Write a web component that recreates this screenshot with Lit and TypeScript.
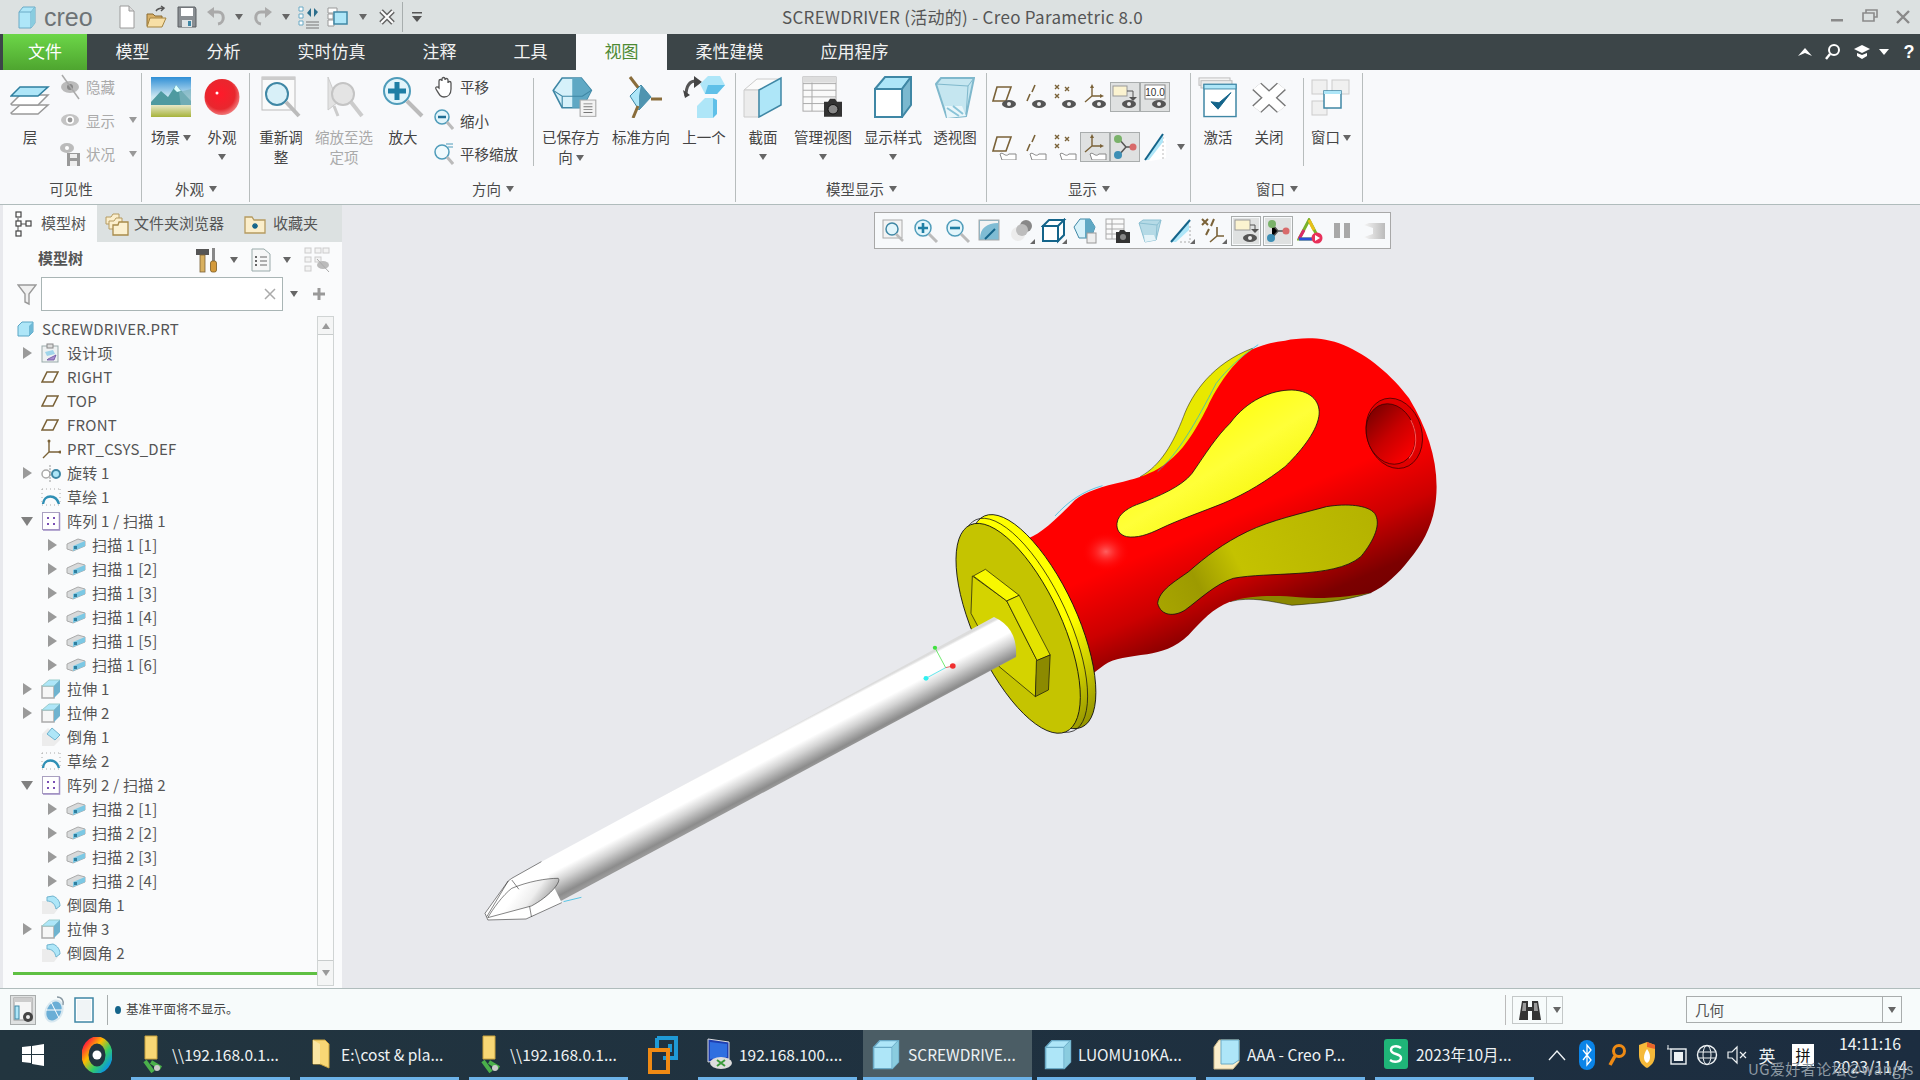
import { LitElement, css, html } from 'lit';
import { customElement } from 'lit/decorators.js';
import { unsafeHTML } from 'lit/directives/unsafe-html.js';

// ---- small helpers -------------------------------------------------------
const B = '#aee6f8';   // icon light blue
const E = '#3f87a5';   // icon blue edge
const BR = '#7a6238';  // datum brown

const ic = (w: number, h: number, body: string) =>
  unsafeHTML(`<svg xmlns="http://www.w3.org/2000/svg" width="${w}" height="${h}" viewBox="0 0 ${w} ${h}">${body}</svg>`);

const tri = html`<i class="tri"></i>`;

// ---- title bar / quick access icons ---------------------------------------
const cube = (w = 18, h = 24) => `<g transform="scale(${w / 18} ${h / 24})"><path d="M1 7 5 2H17V18L13 23H1Z" fill="${B}" stroke="#6aaac6"/><path d="M13 7V23M1 7H13L17 2" fill="none" stroke="#6aaac6"/><path d="M13 7 17 2V18L13 23Z" fill="#8accdf"/></g>`;
const Q = {
  cube: ic(18, 24, cube()),
  doc: ic(18, 24, `<path d="M2 1H11L16 6V23H2Z" fill="#fff" stroke="#9a9a9a"/><path d="M11 1V6H16" fill="#ddd" stroke="#9a9a9a"/>`),
  open: ic(22, 24, `<path d="M2 9H8L10 11H17V21H2Z" fill="#d9b168" stroke="#8a6a30"/><path d="M5 13H21L17 22H2Z" fill="#f7dfa6" stroke="#a58440"/><path d="M11 6C13 3 16 3 18 3M16 1 19 3 16 6" fill="none" stroke="#555" stroke-width="1.5"/>`),
  save: ic(20, 24, `<path d="M1 2H18L19 4V22H1Z" fill="#8a8f93" stroke="#5a5f63"/><rect x="4" y="3" width="12" height="8" fill="#fff"/><rect x="5" y="15" width="10" height="7" fill="#dfe4e6"/><rect x="11" y="16" width="3" height="5" fill="#3f87a5"/>`),
  undo: ic(20, 20, `<path d="M6 5H12C19 5 19 16 12 17" fill="none" stroke="#aaa" stroke-width="3"/><path d="M8 0V11L1 5Z" fill="#aaa"/>`),
  redo: ic(20, 20, `<path d="M14 5H8C1 5 1 16 8 17" fill="none" stroke="#aaa" stroke-width="3"/><path d="M12 0V11L19 5Z" fill="#aaa"/>`),
  regen: ic(22, 24, `<path d="M1 2H5V6H1ZM1 9H5V13H1ZM1 16H5V20H1Z" fill="#fff" stroke="#6aaac6"/><path d="M8 17H21M8 20H21M8 23H21" stroke="#777"/><path d="M9 8 13 3 13 12ZM20 7 16 12 16 3Z" fill="#2c6e8c"/>`),
  win: ic(24, 24, `<path d="M1 3H10V8H1ZM1 15H7V21H1ZM1 9H6V14H1Z" fill="#fff" stroke="#999"/><rect x="7" y="7" width="13" height="12" fill="${B}" stroke="${E}" stroke-width="1.5"/>`),
  x: ic(16, 18, `<path d="M2 3 14 15M14 3 2 15" stroke="#666" stroke-width="5"/><path d="M2 3 14 15M14 3 2 15" stroke="#fff" stroke-width="2"/>`),
  over: ic(12, 14, `<rect x="1" y="2" width="10" height="1.5" fill="#555"/><path d="M1 6H11L6 12Z" fill="#555"/>`),
};

// ---- ribbon icons ---------------------------------------------------------
const R = {
  layers: ic(40, 30, `<path d="M1 27 10 19H38L28 28H2Z" fill="#fff" stroke="#999" stroke-width="1.5"/><path d="M1 18 10 9H38L28 19H2Z" fill="#fff" stroke="#999" stroke-width="1.5"/><path d="M1 10 10 1H38L28 10Z" fill="${B}" stroke="#2f7f9f" stroke-width="1.5"/>`),
  hide: ic(22, 26, `<ellipse cx="11" cy="13" rx="9" ry="6" fill="#bbb"/><circle cx="11" cy="13" r="3" fill="#888"/><path d="M3 1 20 25" stroke="#aaa" stroke-width="1.5"/>`),
  show: ic(20, 20, `<ellipse cx="10" cy="10" rx="9" ry="6" fill="#c4c4c4"/><circle cx="10" cy="10" r="4" fill="#fff"/><circle cx="10" cy="10" r="2.4" fill="#999"/>`),
  state: ic(22, 26, `<ellipse cx="8" cy="7" rx="7" ry="5" fill="#bbb"/><circle cx="8" cy="7" r="2" fill="#fff"/><path d="M8 12H21V25H8Z" fill="#999"/><rect x="11" y="13" width="7" height="4" fill="#eee"/><rect x="11" y="20" width="7" height="5" fill="#eee"/>`),
  scene: ic(40, 41, `<defs><linearGradient id="sk" x2="0" y2="1"><stop offset="0" stop-color="#2f8fd6"/><stop offset=".5" stop-color="#cfe9f2"/></linearGradient><linearGradient id="gr" x2="0" y2="1"><stop offset="0" stop-color="#e7e8c8"/><stop offset="1" stop-color="#a7b33a"/></linearGradient></defs><g transform="translate(0 1)"><rect width="40" height="40" fill="url(#sk)"/><path d="M0 25 10 14 17 20 25 8 40 24V31H0Z" fill="#4e9aa0"/><path d="M25 8 30 14 26 15 23 12Z" fill="#dff"/><path d="M28 15 40 12V31H30Z" fill="#7fb3bd" opacity=".7"/><rect y="28" width="40" height="12" fill="url(#gr)"/></g>`),
  ball: ic(36, 41, `<defs><radialGradient id="bl" cx=".45" cy=".42" r=".6"><stop offset="0" stop-color="#ff1a2a"/><stop offset=".7" stop-color="#e8272e"/><stop offset="1" stop-color="#f08080"/></radialGradient></defs><ellipse cx="18" cy="21" rx="17.5" ry="18" fill="url(#bl)"/><circle cx="13" cy="17" r="1.5" fill="#fff"/>`),
  refit: ic(40, 42, `<rect x="1" y="1" width="33" height="33" fill="#fafafa" stroke="#bbb"/><rect x="1" y="1" width="33" height="3" fill="#ccc"/><circle cx="16" cy="18" r="11" fill="#d8f0f8" stroke="${E}" stroke-width="2"/><path d="M25 26 38 40" stroke="#bbb" stroke-width="4"/>`),
  zoomsel: ic(40, 42, `<path d="M4 1 4 34 14 26Z" fill="#e2e2e2" stroke="#ccc"/><circle cx="19" cy="18" r="11" fill="#e4e4e4" stroke="#c4c4c4" stroke-width="2"/><path d="M27 26 38 40" stroke="#ccc" stroke-width="4"/><path d="M10 30 14 40" stroke="#ccc" stroke-width="3"/>`),
  zoomin: ic(42, 42, `<circle cx="15" cy="15" r="13" fill="#e2f5fb" stroke="#4f9cba" stroke-width="2"/><path d="M15 6V24M6 15H24" stroke="#1f7fa5" stroke-width="5"/><path d="M25 25 40 40" stroke="#bbb" stroke-width="4"/>`),
  pan: ic(20, 22, `<path d="M5 12V5a1.5 1.5 0 0 1 3 0V3a1.5 1.5 0 0 1 3 0V4a1.5 1.5 0 0 1 3 0V7a1.5 1.5 0 0 1 3 0v6C17 18 14 21 10 21 6 21 5 18 2 13 1 11 3 10 5 12Z" fill="#fff" stroke="#555" stroke-width="1.3"/>`),
  zoomout: ic(20, 22, `<circle cx="8" cy="8" r="7" fill="#e2f5fb" stroke="#4f9cba" stroke-width="1.5"/><path d="M4 8H12" stroke="#1f6f95" stroke-width="2.5"/><path d="M13 13 19 20" stroke="#bbb" stroke-width="3"/>`),
  panzoom: ic(20, 22, `<circle cx="8" cy="9" r="7" fill="#f0fafd" stroke="#4f9cba" stroke-width="1.5"/><path d="M12 1H19M14 4H19" stroke="#4f9cba"/><path d="M13 14 19 21" stroke="#bbb" stroke-width="3"/>`),
  saved: ic(58, 42, `<g transform="translate(9 1) scale(1.12 .96)"><path d="M2 14 10 1H27L36 14 28 32H10Z" fill="#d6f1fa" stroke="${E}" stroke-width="1.5"/><path d="M19 1H27L36 14 28 32H19Z" fill="#5fa8c4"/><path d="M2 14 10 20H28L36 14M10 20V32" fill="none" stroke="${E}"/><rect x="26" y="24" width="14" height="17" fill="#f3f3f3" stroke="#aaa"/><path d="M29 28H37M29 31H37M29 34H37M29 37H37" stroke="#777"/></g>`),
  std: ic(42, 42, `<path d="M10 1 20 14" stroke="#8a6d3b" stroke-width="3"/><path d="M10 20 21 9 31 21 19 34Z" fill="${B}" stroke="${E}"/><path d="M21 9 31 21 19 34V20Z" fill="#4f94b0"/><path d="M31 23H42" stroke="#8a6d3b" stroke-width="3"/><path d="M18 30 13 42" stroke="#8a6d3b" stroke-width="3"/>`),
  prev: ic(42, 42, `<path d="M3 20C3 10 6 5 13 5" fill="none" stroke="#555" stroke-width="3"/><path d="M11 0 19 6 11 12ZM0 14 7 19 2 22Z" fill="#444"/><path d="M17 8 25 0H37L42 9 34 18H22Z" fill="${B}"/><path d="M25 9H42L34 18H22Z" fill="#5fc0e8"/><path d="M14 30 22 22H30V42H14Z" fill="${B}"/><path d="M30 22 34 24V38L30 42Z" fill="#5fc0e8"/>`),
  section: ic(40, 42, `<path d="M1 14 13 3V41H2Z" fill="#f4f4f4"/><path d="M1 14 14 3H38L16 14Z" fill="#fbfbfb" stroke="#ccc"/><path d="M1 14H16V41H1Z" fill="#ececec" stroke="#ccc"/><path d="M16 14 38 2V29L16 41Z" fill="${B}" stroke="${E}" stroke-width="1.5"/>`),
  manage: ic(42, 42, `<g transform="scale(1 .95)"><rect x="1" y="1" width="33" height="36" fill="#fafafa" stroke="#aaa"/><path d="M1 8H34M1 15H34M1 22H34M1 29H34M10 1V37" stroke="#aaa"/><rect x="1" y="1" width="33" height="6" fill="#ddd"/><path d="M22 27H26L28 24H33L35 27H40V43H22Z" fill="#333"/><circle cx="31" cy="35" r="5" fill="#888" stroke="#111"/></g>`),
  dstyle: ic(38, 42, `<path d="M1 13H28V41H1Z" fill="#fff" stroke="${E}" stroke-width="2"/><path d="M1 13 11 1H37L28 13Z" fill="${B}" stroke="${E}" stroke-width="2"/><path d="M28 13 37 1V29L28 41Z" fill="#7bb8cf" stroke="${E}" stroke-width="2"/>`),
  persp: ic(40, 42, `<path d="M1 8 6 2H39L31 40 12 42Z" fill="#c5e6f0" stroke="#7fb8cc" stroke-width="2"/><path d="M1 8 33 10 31 40M33 10 39 2" fill="none" stroke="#7fb8cc"/><path d="M12 42 10 30H27L31 40Z" fill="#e9f6fa"/><path d="M12 32 24 40M18 30 28 38" stroke="#8ac4d8" stroke-width="2"/>`),
  activate: ic(40, 42, `<g transform="translate(0 1) scale(1 .92)"><rect x="1" y="1" width="31" height="8" fill="#f4f4f4" stroke="#bbb"/><rect x="3" y="4" width="31" height="8" fill="#ececec" stroke="#bbb"/><rect x="6" y="8" width="32" height="35" fill="#fff" stroke="${E}" stroke-width="1.5"/><rect x="6" y="8" width="32" height="5" fill="${B}" stroke="${E}"/><path d="M13 27 20 35 33 17 21 28Z" fill="#14648a" stroke="#14648a"/></g>`),
  close: ic(36, 38, `<g transform="translate(1 7) scale(.95 .82)"><path d="M5 4 31 32M31 4 5 32" stroke="#777" stroke-width="13"/><path d="M5 4 31 32M31 4 5 32" stroke="#fff" stroke-width="10"/></g>`),
  windowb: ic(40, 42, `<g transform="translate(0 3)"><rect x="1" y="1" width="15" height="14" fill="#f0f0f0" stroke="#ccc"/><rect x="21" y="1" width="17" height="14" fill="#f0f0f0" stroke="#ccc"/><rect x="1" y="22" width="15" height="14" fill="#f0f0f0" stroke="#ccc"/><rect x="13" y="12" width="17" height="17" fill="#fff" stroke="${E}" stroke-width="1.5"/><rect x="13" y="12" width="17" height="3" fill="${B}"/></g>`),
};

// show/hide "0" badge, and the little sketch badge of the second row
const eye = `<ellipse cx="17" cy="20" rx="7" ry="4" fill="#555"/><circle cx="17" cy="20" r="2" fill="#eee"/>`;
const note = `<path d="M8 20C11 17 13 24 17 20H24V26H10Z" fill="#fff" stroke="#888"/>`;
const plane = `<path d="M5 3H19L14 17H1Z" fill="none" stroke="${BR}" stroke-width="1.6"/>`;
const axis = `<path d="M13 1 10 8M8 10 5 17" stroke="${BR}" stroke-width="1.6"/>`;
const pts = `<path d="M3 1 7 5M7 1 3 5M13 3 17 7M17 3 13 7M3 10 7 14M7 10 3 14" stroke="${BR}" stroke-width="1.4"/>`;
const csys = `<path d="M10 2V12L3 18M10 12H20" fill="none" stroke="${BR}" stroke-width="1.4"/><path d="M8 4 10 0 12 4ZM18 10 22 12 18 14Z" fill="${BR}"/>`;
const S = [
  ic(26, 26, plane + eye), ic(26, 26, axis + eye), ic(26, 26, pts + eye), ic(26, 26, csys + eye),
  ic(26, 26, `<rect x="1" y="2" width="14" height="10" fill="#fbf3d0" stroke="#999"/><path d="M15 7H21V15" fill="none" stroke="#555"/><path d="M17 13H25L21 17Z" fill="#555"/>` + eye),
  ic(26, 26, `<rect x="3" y="1" width="20" height="14" fill="#fff" stroke="#888"/><text x="13" y="12" text-anchor="middle" font-family="Liberation Sans" font-size="10" fill="#333">10.0</text>` + eye),
  ic(26, 26, plane + note), ic(26, 26, axis + note), ic(26, 26, pts + note), ic(26, 26, csys + note),
  ic(26, 26, `<path d="M7 5 14 13M14 13 7 21M14 13H21" stroke="#555" stroke-width="1.5"/><circle cx="6" cy="5" r="4" fill="#7ab26a"/><circle cx="6" cy="21" r="4" fill="#3e8fb5"/><circle cx="21" cy="13" r="3.5" fill="#d86a6a"/>`),
  ic(24, 30, `<path d="M3 28 18 8 23 6V26L8 29Z" fill="#fff"/><path d="M20 5V27" stroke="#bbb" stroke-dasharray="2 2"/><path d="M2 28 20 2V10L6 28Z" fill="${B}"/><path d="M2 28 20 2" stroke="#14648a" stroke-width="2"/>`),
];

// ---- floating view toolbar ------------------------------------------------
const mark = `<path d="M26 26H21L26 21Z" fill="#666"/>`;
const FT = [
  ic(26, 26, `<rect x="2" y="2" width="19" height="18" fill="#f3f3f3" stroke="#aaa"/><circle cx="11" cy="11" r="6" fill="#e2f5fb" stroke="${E}" stroke-width="1.5"/><path d="M15 16 22 23" stroke="#bbb" stroke-width="2.5"/>`),
  ic(26, 26, `<circle cx="10" cy="10" r="8" fill="#e2f5fb" stroke="#4f9cba" stroke-width="1.5"/><path d="M10 5V15M5 10H15" stroke="#1f7fa5" stroke-width="2.6"/><path d="M16 16 24 24" stroke="#bbb" stroke-width="3"/>`),
  ic(26, 26, `<circle cx="10" cy="10" r="8" fill="#e2f5fb" stroke="#4f9cba" stroke-width="1.5"/><path d="M5 10H15" stroke="#1f7fa5" stroke-width="2.6"/><path d="M16 16 24 24" stroke="#bbb" stroke-width="3"/>`),
  ic(26, 26, `<rect x="2" y="2" width="20" height="20" fill="#7fbcd4" stroke="#aaa"/><path d="M3 21C3 10 10 5 21 5V3H3Z" fill="#f3f3f3"/><path d="M8 21 18 11" stroke="#14648a" stroke-width="2"/>`),
  ic(26, 26, `<circle cx="17" cy="8" r="6" fill="#888"/><circle cx="9" cy="16" r="7" fill="#ececec"/><circle cx="13" cy="12" r="6" fill="#bdbdbd"/>` + mark),
  ic(26, 26, `<path d="M2 8H17V23H2Z" fill="#fff" stroke="#14648a" stroke-width="2"/><path d="M2 8 8 2H23L17 8ZM17 8 23 2V17L17 23Z" fill="#fff" stroke="#14648a" stroke-width="2"/>` + mark),
  ic(26, 26, `<path d="M1 9 7 1H17L22 9 18 20H6Z" fill="#d6f1fa" stroke="${E}"/><path d="M12 1H17L22 9 18 20H12Z" fill="#5fa8c4"/><rect x="14" y="15" width="9" height="10" fill="#eee" stroke="#999"/>`),
  ic(26, 26, `<rect x="1" y="1" width="18" height="20" fill="#fafafa" stroke="#aaa"/><path d="M1 6H19M1 11H19M1 16H19M7 1V21" stroke="#aaa"/><path d="M11 14H14L15 12H19L21 14H25V25H11Z" fill="#333"/><circle cx="18" cy="19" r="3" fill="#888"/>`),
  ic(26, 26, `<path d="M2 5 6 2H24L19 22 8 24Z" fill="#b5dae6" stroke="#8cc0d2"/><path d="M2 5 20 7 19 22M20 7 24 2" fill="none" stroke="#8cc0d2"/><path d="M8 24 7 17H17L19 22Z" fill="#e4f3f8"/>`),
  ic(26, 26, `<path d="M2 24 20 3V12L7 24Z" fill="${B}"/><path d="M2 24 21 2" stroke="#14648a" stroke-width="2"/><path d="M21 8V24H9" fill="none" stroke="#aaa" stroke-dasharray="2 2"/>` + mark),
  ic(26, 26, `<path d="M1 1 7 7M7 1 1 7M13 1 10 8M8 11 5 17" stroke="${BR}" stroke-width="2"/><path d="M16 9V18L9 24M16 18H23" fill="none" stroke="${BR}" stroke-width="1.6"/>` + mark),
  ic(26, 26, `<rect x="2" y="2" width="15" height="10" fill="#fbf3d0" stroke="#999"/><path d="M17 7H22V12" fill="none" stroke="#555"/><path d="M18 11H26L22 15Z" fill="#555"/>` + eye),
  ic(26, 26, `<path d="M7 6 13 13 7 20M13 13H21" stroke="#555" stroke-width="1.5"/><circle cx="7" cy="6" r="4" fill="#7ab26a"/><circle cx="6" cy="20" r="4" fill="#3e8fb5"/><circle cx="21" cy="13" r="3.5" fill="#d86a6a"/>`),
  ic(26, 26, `<path d="M12 2 2 21H22Z" fill="#fff" stroke="#7ab22a" stroke-width="3"/><path d="M2 21 7 12" stroke="#d92a6a" stroke-width="3"/><path d="M2 21H15" stroke="#2a4fd9" stroke-width="3"/><path d="M12 2 17 12" stroke="#e8c01a" stroke-width="3"/><circle cx="20" cy="20" r="5.5" fill="#e8305a"/><path d="M18 17 23 20 18 23Z" fill="#fff"/>`),
  ic(26, 26, `<rect x="5" y="5" width="6" height="15" fill="#a8a8a8"/><rect x="15" y="5" width="6" height="15" fill="#a8a8a8"/>`),
  ic(26, 26, `<defs><linearGradient id="st"><stop offset="0" stop-color="#f4f4f4"/><stop offset="1" stop-color="#bbb"/></linearGradient></defs><path d="M3 7 8 5H24V21H8L3 19 12 16V10Z" fill="url(#st)"/>`),
];
const ftOn = new Set([11, 12]);

// ---- tree icons -----------------------------------------------------------
const T: Record<string, unknown> = {
  part: ic(17, 16, `<path d="M1 5 5 1H16V11L12 15H1Z" fill="${B}" stroke="#5ba5c4"/><path d="M12 5V15L16 11V1ZM1 5H12" fill="#6fb9d6"/>`),
  design: ic(18, 20, `<rect x="1" y="3" width="16" height="16" fill="#eef1f2" stroke="#9aa"/><rect x="6" y="1" width="6" height="4" fill="#ddd" stroke="#888"/><path d="M4 9 12 7 14 11 6 13Z" fill="#9fd4ea"/><path d="M7 16 15 12 13 17H6Z" fill="#a78fd0" stroke="#6a4fa0" stroke-width=".8"/>`),
  plane: ic(18, 14, `<path d="M6 2H17L12 12H1Z" fill="none" stroke="${BR}" stroke-width="1.6"/>`),
  csys: ic(20, 20, `<path d="M8 3V13L2 19M8 13H18" fill="none" stroke="${BR}" stroke-width="1.4"/><circle cx="8" cy="2" r="1.5" fill="${BR}"/><circle cx="19" cy="13" r="1.5" fill="${BR}"/>`),
  revolve: ic(20, 18, `<circle cx="5" cy="10" r="4" fill="#fff" stroke="#aaa" stroke-width="1.5"/><circle cx="15" cy="10" r="4" fill="${B}" stroke="${E}" stroke-width="2"/><path d="M9 1V18" stroke="#999" stroke-dasharray="2 1"/>`),
  sketch: ic(20, 18, `<path d="M2 16C3 6 15 6 18 16" fill="none" stroke="#2f8fb5" stroke-width="2.4"/><path d="M1 1H19M1 17H19M1 1V17M19 1V17" stroke="#aaa" stroke-dasharray="1 3"/>`),
  pattern: ic(20, 20, `<rect x="1.5" y="1.5" width="17" height="17" fill="#fff" stroke="#a9a0c0"/><path d="M18.5 2V19H2" fill="none" stroke="#a08fc4" stroke-width="1.5"/><path d="M6 6H8V8H6ZM12 6H14V8H12ZM6 12H8V14H6ZM12 12H14V14H12Z" fill="#7a4fb5"/>`),
  sweep: ic(20, 14, `<path d="M1 6 12 1 19 3V8L7 13 1 11Z" fill="#d8dadb" stroke="#aaa"/><path d="M7 8 19 3V8L7 13Z" fill="#7cc8e4"/><rect x="8" y="8" width="3" height="3" fill="#2f7f9f"/>`),
  extrude: ic(20, 20, `<path d="M1 7H13V19H1Z" fill="#f6f6f6" stroke="#aaa" stroke-width="1.5"/><path d="M1 7 8 1H19L13 7Z" fill="${B}" stroke="#9cc"/><path d="M13 7 19 1V13L13 19Z" fill="#6fb3cf"/>`),
  chamfer: ic(20, 20, `<path d="M1 7 7 1 19 11V13L13 19H1Z" fill="#ececec"/><path d="M6 7 11 1 19 8 14 13Z" fill="${B}" stroke="#6fb3cf"/>`),
  round: ic(20, 20, `<path d="M1 6H10C14 6 17 10 17 14L13 19H1Z" fill="#ececec"/><path d="M6 2 12 1C17 3 19 7 19 11L15 14C14 9 11 6 6 6Z" fill="${B}" stroke="#6fb3cf"/>`),
};

interface Row { l: number; t: string; i: string; a?: 'r' | 'd' }
const rows: Row[] = [
  { l: 0, t: 'SCREWDRIVER.PRT', i: 'part' },
  { l: 1, t: '设计项', i: 'design', a: 'r' },
  { l: 1, t: 'RIGHT', i: 'plane' },
  { l: 1, t: 'TOP', i: 'plane' },
  { l: 1, t: 'FRONT', i: 'plane' },
  { l: 1, t: 'PRT_CSYS_DEF', i: 'csys' },
  { l: 1, t: '旋转 1', i: 'revolve', a: 'r' },
  { l: 1, t: '草绘 1', i: 'sketch' },
  { l: 1, t: '阵列 1 / 扫描 1', i: 'pattern', a: 'd' },
  { l: 2, t: '扫描 1 [1]', i: 'sweep', a: 'r' },
  { l: 2, t: '扫描 1 [2]', i: 'sweep', a: 'r' },
  { l: 2, t: '扫描 1 [3]', i: 'sweep', a: 'r' },
  { l: 2, t: '扫描 1 [4]', i: 'sweep', a: 'r' },
  { l: 2, t: '扫描 1 [5]', i: 'sweep', a: 'r' },
  { l: 2, t: '扫描 1 [6]', i: 'sweep', a: 'r' },
  { l: 1, t: '拉伸 1', i: 'extrude', a: 'r' },
  { l: 1, t: '拉伸 2', i: 'extrude', a: 'r' },
  { l: 1, t: '倒角 1', i: 'chamfer' },
  { l: 1, t: '草绘 2', i: 'sketch' },
  { l: 1, t: '阵列 2 / 扫描 2', i: 'pattern', a: 'd' },
  { l: 2, t: '扫描 2 [1]', i: 'sweep', a: 'r' },
  { l: 2, t: '扫描 2 [2]', i: 'sweep', a: 'r' },
  { l: 2, t: '扫描 2 [3]', i: 'sweep', a: 'r' },
  { l: 2, t: '扫描 2 [4]', i: 'sweep', a: 'r' },
  { l: 1, t: '倒圆角 1', i: 'round' },
  { l: 1, t: '拉伸 3', i: 'extrude', a: 'r' },
  { l: 1, t: '倒圆角 2', i: 'round' },
];

// ---- taskbar icons --------------------------------------------------------
const fileIcon = ic(18, 32, `<path d="M1 2H13L17 6V30L8 26H1Z" fill="#f8d775" stroke="#c9a33f"/><path d="M1 2V26H8V6Z" fill="#fbe6a2"/>`);
const netFolder = ic(26, 38, `<path d="M6 1H18V24H6Z" fill="#f8d775" stroke="#c9a33f"/><path d="M12 27 22 33" stroke="#4bb04b" stroke-width="4"/><path d="M6 26 14 37" stroke="#4bb04b" stroke-width="4"/><circle cx="18" cy="33" r="3" fill="#ccc"/>`);
const taskCube = ic(28, 32, cube(28, 32));
const TB = [
  { i: netFolder, t: '\\\\192.168.0.1...' },
  { i: fileIcon, t: 'E:\\cost & pla...' },
  { i: netFolder, t: '\\\\192.168.0.1...' },
];
const TB2 = [
  { i: ic(28, 32, `<path d="M3 1 24 4V21L3 24Z" fill="#1f3fb0" stroke="#ddd"/><path d="M5 4 22 6V19L5 21Z" fill="#2f6fe0"/><ellipse cx="16" cy="25" rx="11" ry="6" fill="#ddd"/><path d="M12 28 20 22M20 28 12 22" stroke="#3a9a3a" stroke-width="2"/>`), t: '192.168.100....', on: false },
  { i: taskCube, t: 'SCREWDRIVE...', on: true },
  { i: taskCube, t: 'LUOMU10KA...', on: false },
  { i: ic(28, 32, `<path d="M1 9 6 2H26V24L20 31H1Z" fill="#fbeecb" stroke="#cdb98a"/><path d="M8 2H26V22L20 26H8Z" fill="${B}" stroke="#6aaac6"/>`), t: 'AAA - Creo P...', on: false },
  { i: ic(26, 32, `<rect x="1" y="1" width="24" height="30" rx="3" fill="#1fb578"/><path d="M18 10C14 7 8 8 8 12 8 17 18 15 18 20 18 24 11 25 7 22" fill="none" stroke="#fff" stroke-width="2.4"/>`), t: '2023年10月...', on: false },
];

// the model itself, drawn in full screen coords; the canvas starts at 342,205
const DRIVER = `<svg xmlns="http://www.w3.org/2000/svg" width="1578" height="783" viewBox="342 205 1578 783">
  <defs>
    <linearGradient id="red" gradientUnits="userSpaceOnUse" x1="760" y1="140" x2="1140" y2="1000">
      <stop offset="0" stop-color="#ff0000"/><stop offset=".5" stop-color="#ff0000"/><stop offset=".68" stop-color="#cc0000"/><stop offset=".84" stop-color="#7c0000"/><stop offset="1" stop-color="#6a0000"/>
    </linearGradient>
    <radialGradient id="spot" cx="0.5" cy="0.5" r="0.5"><stop offset="0" stop-color="#ff6060"/><stop offset=".4" stop-color="#ff3030" stop-opacity=".7"/><stop offset="1" stop-color="#ff0000" stop-opacity="0"/></radialGradient>
    <linearGradient id="y1" gradientUnits="userSpaceOnUse" x1="780" y1="250" x2="1010" y2="600"><stop offset="0" stop-color="#ffff00"/><stop offset=".5" stop-color="#ffff38"/><stop offset="1" stop-color="#f4f400"/></linearGradient>
    <linearGradient id="y2" gradientUnits="userSpaceOnUse" x1="700" y1="880" x2="1300" y2="570"><stop offset="0" stop-color="#a8a500"/><stop offset=".2" stop-color="#9d9a00"/><stop offset=".4" stop-color="#c4c200"/><stop offset="1" stop-color="#b5b300"/></linearGradient>
    <linearGradient id="rim" gradientUnits="userSpaceOnUse" x1="200" y1="600" x2="500" y2="1220"><stop offset="0" stop-color="#ffff00"/><stop offset=".6" stop-color="#ffff00"/><stop offset=".8" stop-color="#c4c400"/><stop offset="1" stop-color="#808000"/></linearGradient>
    <linearGradient id="sh" gradientUnits="userSpaceOnUse" x1="760" y1="743" x2="781" y2="783"><stop offset="0" stop-color="#dcdcdc"/><stop offset=".05" stop-color="#fff"/><stop offset=".4" stop-color="#fff"/><stop offset=".62" stop-color="#d4d4d4"/><stop offset=".92" stop-color="#8c8c8c"/><stop offset="1" stop-color="#999"/></linearGradient>
    <linearGradient id="fl" gradientUnits="userSpaceOnUse" x1="170" y1="800" x2="260" y2="860"><stop offset="0" stop-color="#fff"/><stop offset=".4" stop-color="#eee"/><stop offset="1" stop-color="#888"/></linearGradient>
    <linearGradient id="hole" gradientUnits="userSpaceOnUse" x1="1320" y1="260" x2="1420" y2="420"><stop offset="0" stop-color="#7a0000"/><stop offset=".5" stop-color="#c80000"/><stop offset="1" stop-color="#ff0000"/></linearGradient>
  </defs>

  <g transform="translate(920 320) scale(.3444 .3333)">
    <path d="M640 470C700 435 735 370 765 290 790 220 850 130 965 85 L990 120 C900 160 860 230 830 290 790 370 740 430 660 475Z" fill="#e8e800" stroke="#111" stroke-width="1.5"/>
    <path d="M900 845C960 828 1020 845 1080 856 1150 850 1230 845 1310 818L1200 800 920 800Z" fill="#8a8700" stroke="#111" stroke-width="1.5"/>
    <path d="M300 660C340 650 385 610 450 540 480 515 530 498 590 485 620 478 640 472 665 460 700 445 745 410 775 365 800 330 815 300 835 260 865 195 910 125 965 88 1000 72 1030 65 1060 62 1110 52 1170 50 1230 75 1300 105 1370 165 1420 235 1470 320 1500 410 1500 500 1500 590 1470 660 1420 720 1390 760 1350 800 1310 818 1270 825 1180 840 1100 832 1040 826 960 825 900 845 850 865 820 900 780 945 740 985 700 995 660 1003 610 1010 560 1015 535 1035L505 1058C480 950 420 800 300 660Z" fill="url(#red)"/>
    <path d="M392 588C430 545 470 515 530 497" fill="none" stroke="#19b5e0" stroke-width="2"/>
    <path d="M690 455C750 400 800 310 860 190 890 150 930 110 982 74" fill="none" stroke="#19b5e0" stroke-width="2"/>
    <ellipse cx="540" cy="695" rx="70" ry="60" fill="url(#spot)"/>
    <path d="M572 610C575 580 610 560 640 550 690 530 760 500 790 460 830 400 860 350 900 310 950 240 1020 210 1080 210 1140 212 1165 250 1158 290 1150 340 1100 400 1060 440 1010 480 950 520 880 550 820 575 750 600 700 625 660 645 630 655 600 650 580 645 570 630 572 610Z" fill="url(#y1)" stroke="#111" stroke-width="2.4"/>
    <path d="M690 850C695 810 740 785 780 755 830 710 880 670 950 635 1020 600 1110 580 1180 560 1240 550 1300 555 1320 580 1340 610 1320 660 1280 710 1240 745 1170 755 1100 760 1030 765 960 765 910 775 860 790 810 840 770 870 740 890 700 890 690 850Z" fill="url(#y2)" stroke="#111" stroke-width="2.4"/>
    <ellipse cx="1377" cy="340" rx="80" ry="107" transform="rotate(-15 1377 340)" fill="#e00000" stroke="#300" stroke-width="2"/>
    <ellipse cx="1367" cy="342" rx="70" ry="92" transform="rotate(-15 1367 342)" fill="url(#hole)" stroke="#300" stroke-width="2"/>
    <path d="M1425 300C1445 340 1445 385 1420 415" fill="none" stroke="#ff5050" stroke-width="3"/>

    <ellipse cx="328" cy="905" rx="127" ry="347" transform="rotate(-24 328 905)" fill="url(#rim)" stroke="#111" stroke-width="2.4"/>
    <ellipse cx="304" cy="916" rx="127" ry="347" transform="rotate(-24 304 916)" fill="none" stroke="#111" stroke-width="2"/>
    <ellipse cx="285" cy="925" rx="127" ry="340" transform="rotate(-24 285 925)" fill="#c5c400" stroke="#111" stroke-width="2.4"/>
    <path d="M152 768 252 843 340 1022 335 1130 230 1040 148 880Z" fill="#d4d300" stroke="#111" stroke-width="2"/>
    <path d="M155 768 190 748 288 826 252 843Z" fill="#f8f800" stroke="#111" stroke-width="2"/>
    <path d="M252 843 288 826 378 1005 340 1022Z" fill="#e4e400" stroke="#111" stroke-width="2"/>
    <path d="M338 1022 378 1005 373 1110 335 1130Z" fill="#8c8a00" stroke="#111" stroke-width="2"/>
  </g>

  <path d="M541 862 994 617Q1018 628 1016 657L531 917Z" fill="url(#sh)"/>

  <g transform="translate(460 620) scale(.3571 .3333)">
    <path d="M228 725 145 775 135 783 70 880 78 900 185 897 285 848Z" fill="#fff"/>
    <path d="M145 805C190 785 240 775 275 775 285 785 250 830 200 858L78 893C90 870 120 825 145 805Z" fill="url(#fl)" stroke="#222" stroke-width="1.6"/>
    <path d="M228 725 145 775 135 783 70 880 78 900 185 897 285 848M135 783 75 890M145 780 165 808M195 860 200 890" fill="none" stroke="#222" stroke-width="1.6"/>
    <path d="M290 845 340 832" stroke="#19b5e0" stroke-width="2"/>
    <path d="M1360 143 1330 83" stroke="#2fe02f" stroke-width="2"/>
    <path d="M1360 143 1380 138" stroke="#e02020" stroke-width="2"/>
    <path d="M1360 143 1305 175" stroke="#20e0e8" stroke-width="2"/>
    <circle cx="1330" cy="83" r="6" fill="#40e040"/><circle cx="1380" cy="138" r="8" fill="#f03030"/><circle cx="1305" cy="175" r="7" fill="#30f0f0"/>
  </g>
</svg>`;

@customElement('app-root')
export class AppRoot extends LitElement {
  static styles = css`
    :host {
      display: block;
      width: 1920px;
      height: 1080px;
      overflow: hidden;
      background: #e8e9ed;
      font-family: "Noto Sans CJK SC", "Noto Sans", sans-serif;
      color: #444;
      position: relative;
    }
    svg { display: block; flex: none; }
    .page { display: flex; flex-direction: column; height: 1080px; }
    .tri {
      display: inline-block;
      width: 0;
      height: 0;
      border: 4.5px solid transparent;
      border-top: 6px solid #666;
      border-bottom: 0;
      flex: none;
    }

    /* title bar */
    .title {
      height: 34px;
      background: #dce1e1;
      display: flex;
      align-items: center;
      flex: none;
    }
    .logo { display: flex; align-items: center; width: 114px; padding-left: 18px; box-sizing: border-box; gap: 8px; }
    .logo b { font: 400 25px/30px "Liberation Sans", sans-serif; color: #6d7376; letter-spacing: 0; }
    .qa { display: flex; align-items: center; width: 314px; }
    .qa > span { display: flex; justify-content: center; align-items: center; flex: none; }
    .qa .sep { width: 1px; height: 30px; background: #a8aeae; margin: 0 8px 0 0; }
    .caption { margin-left: 354px; width: 700px; font-size: 17px; line-height: 24px; color: #555; white-space: nowrap; letter-spacing: .3px; }
    .wctl { margin-left: auto; display: flex; align-items: center; padding-right: 8px; gap: 15px; }

    /* tab bar */
    .tabs {
      height: 36px;
      background: #3c4548;
      display: flex;
      align-items: stretch;
      padding-left: 3px;
      flex: none;
      font-size: 17px;
      color: #f2f2f2;
    }
    .tab { padding: 0 28.5px; line-height: 34px; }
    .tab.file { width: 84px; box-sizing: border-box; padding: 0; text-align: center; background: linear-gradient(#6cd648, #4ea52f); color: #fff; }
    .tab.on { background: #f8f9fb; color: #4d8a33; }
    .tabtools { margin-left: auto; display: flex; align-items: center; padding-right: 4px; gap: 12px; }
    .tabtools .near { margin-left: -5px; }

    /* ribbon */
    .ribbon {
      height: 135px;
      box-sizing: border-box;
      background: #f8f9fb;
      border-bottom: 1px solid #b0bcbc;
      display: flex;
      flex: none;
      font-size: 14.5px;
    }
    .grp { display: flex; flex-direction: column; position: relative; box-sizing: border-box; }
    .grp::after { content: ''; position: absolute; right: 0; top: 3px; bottom: 2px; width: 1px; background: #b8bdbd; }
    .grp-body { display: flex; height: 106px; box-sizing: border-box; }
    .grp-foot { height: 26px; display: flex; justify-content: center; align-items: center; gap: 5px; color: #4a4a4a; line-height: 26px; }
    .big { display: flex; flex-direction: column; align-items: center; flex: none; text-align: center; line-height: 20px; white-space: nowrap; }
    .big .ico { height: 57px; padding-top: 6px; box-sizing: border-box; display: flex; align-items: flex-start; justify-content: center; }
    .big.off { color: #aaa; }
    .big .tri, .small .tri { vertical-align: 2px; margin-left: 3px; }
    .big .lone { display: block; margin: 7px auto 0; }
    .col { display: flex; flex-direction: column; flex: none; }
    .small { height: 33.5px; display: flex; align-items: center; gap: 6px; white-space: nowrap; }
    .small .s-ico { width: 20px; display: flex; justify-content: center; }
    .small.off { color: #aaa; }
    .small.off .tri { border-top-color: #999; margin-left: 8px; }
    .rsep { width: 1px; height: 88px; margin-top: 8px; background: #b8bdbd; flex: none; }
    .sgrid { display: grid; grid-template-columns: repeat(6, 30px) 22px; grid-template-rows: 30px 30px; row-gap: 20px; padding: 12px 0 0 3px; align-items: center; justify-items: center; }
    .tg { width: 30px; height: 30px; display: flex; align-items: center; justify-content: center; }
    .tg.on { background: #dfe1e1; outline: 1px solid #a9adad; outline-offset: -1px; }

    /* middle */
    .main { flex: 1; display: flex; min-height: 0; position: relative; }
    .panel { width: 339px; margin-left: 3px; background: #fafbfc; display: flex; flex-direction: column; flex: none; }
    .ptabs { display: flex; height: 37px; background: #dce1e1; font-size: 15px; color: #555; flex: none; }
    .ptab { display: flex; align-items: center; gap: 5px; line-height: 33px; }
    .ptab span { height: 35px; }
    .ptab.t1 { width: 94px; padding-left: 12px; box-sizing: border-box; background: #fafbfc; gap: 8px; }
    .ptab.t2 { width: 145px; padding-left: 8px; box-sizing: border-box; gap: 5px; }
    .ptab.t3 { padding-left: 2px; gap: 7px; }
    .phead { height: 35px; display: flex; align-items: center; flex: none; padding: 0 0 0 35px; }
    .phead b { font-size: 15px; font-weight: 700; color: #555; width: 157px; line-height: 31px; height: 35px; }
    .phead .tri { margin: 0 13px 0 12px; }
    .filter { display: flex; align-items: center; height: 34px; padding-left: 14px; flex: none; }
    .search { width: 242px; height: 34px; box-sizing: border-box; border: 1px solid #a9b5b5; background: #fff; margin-left: 4px; display: flex; justify-content: flex-end; align-items: center; padding-right: 6px; }
    .filter .tri { margin: 0 14px 0 7px; }
    .treewrap { flex: 1; position: relative; display: flex; min-height: 0; }
    .tree { flex: 1; padding-top: 6px; font-size: 15px; color: #555; letter-spacing: .25px; }
    .row { height: 24px; display: flex; align-items: center; white-space: nowrap; line-height: 24px; }
    .row.l0 { padding-left: 14px; }
    .row.l1 { padding-left: 20px; }
    .row.l2 { padding-left: 45px; }
    .row .ar { width: 18px; height: 12px; flex: none; display: flex; justify-content: flex-start; align-items: center; }
    .ar i { display: block; width: 0; height: 0; }
    .ar.r i { border-left: 9px solid #9a9a9a; border-top: 6px solid transparent; border-bottom: 6px solid transparent; }
    .ar.d i { border-top: 9px solid #808080; border-left: 6px solid transparent; border-right: 6px solid transparent; margin-left: -2px; }
    .row .ti { width: 26px; flex: none; display: flex; justify-content: flex-start; align-items: center; }
    .row.l0 .ti { width: 25px; }
    .green { position: absolute; left: 10px; width: 305px; bottom: 13px; height: 3px; background: #5fc043; }
    .sbar { position: absolute; right: 8px; top: 5px; bottom: 2px; width: 17px; box-sizing: border-box; border: 1px solid #d0d4d4; background: #fbfcfc; display: flex; flex-direction: column; justify-content: space-between; }
    .sbtn { height: 17px; display: flex; align-items: center; justify-content: center; background: #f4f5f5; }
    .sbtn.up { border-bottom: 1px solid #c8cccc; }
    .sbtn.dn { border-top: 1px solid #c8cccc; height: 24px; }
    .canvas { flex: 1; background: #e8e9ed; border-left: 0; position: relative; }
    .canvas > svg { position: absolute; left: 0; top: 0; }
    .ft {
      position: absolute;
      left: 532px;
      top: 7px;
      width: 517px;
      height: 37px;
      box-sizing: border-box;
      border: 1px solid #a8a8a8;
      background: #f7f9fb;
      display: flex;
      align-items: center;
      padding-left: 3px;
    }
    .ft span { width: 32px; height: 28px; display: flex; align-items: center; justify-content: center; flex: none; }
    .ft span.on > svg { background: #dfe1e1; outline: 1px solid #a9adad; outline-offset: 1px; }

    /* status */
    .status {
      height: 42px;
      box-sizing: border-box;
      background: #f7fbfb;
      border-top: 1px solid #b0bcbc;
      display: flex;
      align-items: center;
      flex: none;
      font-size: 12.5px;
      color: #444;
      padding-left: 10px;
    }
    .stext { line-height: 18px; height: 20px; }
    .stog { width: 26px; height: 30px; background: #dfe1e1; outline: 1px solid #a9adad; outline-offset: -1px; display: flex; align-items: center; justify-content: center; margin-right: 7px; }
    .status .vs { width: 1px; height: 30px; background: #a8aeae; margin: 0 7px 0 13px; }
    .dot { width: 6px; height: 8px; border-radius: 50%; background: #14648a; margin-right: 5px; margin-left: 0; }
    .bino { margin-left: auto; display: flex; align-items: center; height: 30px; border-left: 1px solid #bbb; padding-left: 6px; box-sizing: border-box; }
    .binobox { width: 51px; height: 28px; border: 1px solid #c4c8c8; box-sizing: border-box; display: flex; align-items: center; }
    .binobox > span { width: 33px; display: flex; justify-content: center; border-right: 1px solid #c4c8c8; height: 100%; align-items: center; }
    .binobox .tri { margin-left: 6px; }
    .geo { margin-left: 123px; margin-right: 18px; width: 216px; height: 27px; box-sizing: border-box; border: 1px solid #a9adad; display: flex; align-items: center; font-size: 14.5px; padding-left: 8px; color: #555; }
    .geo em { font-style: normal; flex: 1; }
    .geo div { width: 18px; height: 100%; border-left: 1px solid #a9adad; display: flex; align-items: center; justify-content: center; }

    /* taskbar */
    .taskbar {
      height: 50px;
      background: linear-gradient(90deg, #22353f, #1c2d40);
      display: flex;
      align-items: stretch;
      flex: none;
      color: #eef2f4;
      font-size: 15.5px;
      position: relative;
      gap: 10px;
    }
    .tstart { width: 121px; display: flex; align-items: center; padding-left: 22px; box-sizing: border-box; gap: 38px; flex: none; }
    .titem { width: 159px; flex: none; box-sizing: border-box; border-bottom: 3px solid #6cb2e8; display: flex; align-items: center; white-space: nowrap; line-height: 24px; }
    .titem .ticon { width: 41px; display: flex; justify-content: center; flex: none; }
    .titem.on { width: 169px; margin: 0 -5px 0 -4px; background: #4b5d65; }
    .titem.on .ticon { width: 45px; }
    .vm { width: 50px; display: flex; align-items: center; justify-content: center; flex: none; }
    .tray { display: flex; align-items: center; flex: none; margin-left: -2px; }
    .tray > span { width: 30px; display: flex; justify-content: center; align-items: center; font-size: 17px; }
    .clock { position: absolute; left: 1830px; top: 1px; width: 80px; text-align: center; font-size: 16px; line-height: 24px; }
    .clock.d { top: 24px; }
    .wm { position: absolute; left: 1748px; top: 28px; font-size: 15px; line-height: 22px; color: #8d99a3; white-space: nowrap; letter-spacing: .4px; }
  `;

  private _big(label: unknown, icon: unknown, w: number, off = false) {
    return html`<div class="big ${off ? 'off' : ''}" style="width:${w}px"><div class="ico">${icon}</div><div>${label}</div></div>`;
  }

  private _small(label: string, icon: unknown, off = false, arrow = false) {
    return html`<div class="small ${off ? 'off' : ''}"><span class="s-ico">${icon}</span><span>${label}</span>${arrow ? tri : ''}</div>`;
  }

  private _foot(label: string, arrow = true) {
    return html`<div class="grp-foot"><span>${label}</span>${arrow ? tri : ''}</div>`;
  }

  private _titleBar() {
    const sp = (w: number, c: unknown) => html`<span style="width:${w}px">${c}</span>`;
    return html`<div class="title">
      <div class="logo">${Q.cube}<b>creo</b></div>
      <div class="qa">
        ${sp(26, Q.doc)}${sp(32, Q.open)}${sp(30, Q.save)}${sp(28, Q.undo)}${sp(18, tri)}${sp(30, Q.redo)}${sp(16, tri)}${sp(30, Q.regen)}${sp(30, Q.win)}${sp(18, tri)}${sp(30, Q.x)}
        <i class="sep"></i>${Q.over}
      </div>
      <div class="caption">SCREWDRIVER (活动的) - Creo Parametric 8.0</div>
      <div class="wctl">
        ${ic(18, 18, `<rect x="3" y="11" width="12" height="2.5" fill="#8a8a8a"/>`)}
        ${ic(18, 18, `<path d="M5 5V2H16V9H13M2 5H13V13H2Z" fill="none" stroke="#8a8a8a" stroke-width="1.6"/>`)}
        ${ic(18, 18, `<path d="M3 3 15 15M15 3 3 15" stroke="#8a8a8a" stroke-width="2.4"/>`)}
      </div>
    </div>`;
  }

  private _tabs() {
    const names = ['模型', '分析', '实时仿真', '注释', '工具', '视图', '柔性建模', '应用程序'];
    return html`<div class="tabs">
      <div class="tab file">文件</div>
      ${names.map(n => html`<div class="tab ${n === '视图' ? 'on' : ''}">${n}</div>`)}
      <div class="tabtools">
        ${ic(16, 12, `<path d="M1 10 8 2 15 10 8 7Z" fill="#fff"/>`)}
        ${ic(16, 18, `<circle cx="9" cy="7" r="5" fill="none" stroke="#fff" stroke-width="2"/><path d="M5 11 1 16" stroke="#fff" stroke-width="2.4"/>`)}
        ${ic(18, 16, `<path d="M9 1 17 5 9 9 1 5Z" fill="#fff"/><path d="M4 9V12L9 15 14 12V9L9 11Z" fill="#fff"/>`)}
        <span class="near">${ic(12, 8, `<path d="M1 1H11L6 7Z" fill="#fff"/>`)}</span>
        <span style="font:700 18px/20px 'Liberation Sans';color:#fff;width:14px;text-align:center">?</span>
      </div>
    </div>`;
  }

  private _ribbon() {
    return html`<div class="ribbon">
      <div class="grp" style="width:142px">
        <div class="grp-body">
          <div class="big" style="width:60px"><div class="ico" style="padding-top:16px">${R.layers}</div><div>层</div></div>
          <div class="col">
            ${this._small('隐藏', R.hide, true)}
            ${this._small('显示', R.show, true, true)}
            ${this._small('状况', R.state, true, true)}
          </div>
        </div>
        ${this._foot('可见性', false)}
      </div>
      <div class="grp" style="width:108px">
        <div class="grp-body" style="padding-left:3px">
          ${this._big(html`场景${tri}`, R.scene, 52)}
          ${this._big(html`外观<i class="tri lone"></i>`, R.ball, 50)}
        </div>
        ${this._foot('外观')}
      </div>
      <div class="grp" style="width:486px">
        <div class="grp-body">
          ${this._big(html`重新调<br>整`, R.refit, 62)}
          ${this._big(html`缩放至选<br>定项`, R.zoomsel, 64, true)}
          ${this._big('放大', R.zoomin, 54)}
          <div class="col" style="width:98px;margin-left:4px">
            ${this._small('平移', R.pan)}
            ${this._small('缩小', R.zoomout)}
            ${this._small('平移缩放', R.panzoom)}
          </div>
          <i class="rsep" style="margin-left:1px"></i>
          <span style="width:3px"></span>
          ${this._big(html`已保存方<br>向${tri}`, R.saved, 68)}
          ${this._big('标准方向', R.std, 72)}
          ${this._big('上一个', R.prev, 54)}
        </div>
        ${this._foot('方向')}
      </div>
      <div class="grp" style="width:251px">
        <div class="grp-body">
          ${this._big(html`截面<i class="tri lone"></i>`, R.section, 54)}
          ${this._big(html`管理视图<i class="tri lone"></i>`, R.manage, 66)}
          ${this._big(html`显示样式<i class="tri lone"></i>`, R.dstyle, 74)}
          ${this._big('透视图', R.persp, 50)}
        </div>
        ${this._foot('模型显示')}
      </div>
      <div class="grp" style="width:204px">
        <div class="grp-body">
          <div class="sgrid">
            ${S.map((s, i) => html`<div class="tg ${i === 4 || i === 5 || i === 9 || i === 10 ? 'on' : ''}">${s}</div>${i === 5 ? html`<span></span>` : ''}`)}
            ${tri}
          </div>
        </div>
        ${this._foot('显示')}
      </div>
      <div class="grp" style="width:172px">
        <div class="grp-body">
          ${this._big('激活', R.activate, 54)}
          ${this._big('关闭', R.close, 48)}
          <span style="width:10px"></span>
          <i class="rsep"></i>
          ${this._big(html`窗口${tri}`, R.windowb, 54)}
        </div>
        ${this._foot('窗口')}
      </div>
    </div>`;
  }

  private _panel() {
    return html`<div class="panel">
      <div class="ptabs">
        <div class="ptab t1">
          ${ic(18, 26, `<path d="M3 7V20M3 13H11" stroke="#555"/><rect x="1" y="1" width="5" height="5" fill="#fff" stroke="#444" stroke-width="1.2"/><rect x="1" y="10" width="5" height="5" fill="#fff" stroke="#444" stroke-width="1.2"/><rect x="1" y="20" width="5" height="5" fill="#fff" stroke="#444" stroke-width="1.2"/><rect x="11" y="10" width="5" height="5" fill="#fff" stroke="#444" stroke-width="1.2"/>`)}
          <span>模型树</span>
        </div>
        <div class="ptab t2">
          ${ic(24, 24, `<path d="M1 5H6L8 2H14V12H1Z" fill="#fbeecb" stroke="#b59a60"/><path d="M4 9H9L11 6H17V17H4Z" fill="#fbeecb" stroke="#b59a60"/><path d="M8 13H13L14 10H23V23H8Z" fill="#fbf0d0" stroke="#a88a4a" stroke-width="1.3"/>`)}
          <span>文件夹浏览器</span>
        </div>
        <div class="ptab t3">
          ${ic(22, 20, `<path d="M1 3H8L10 6H21V19H1Z" fill="#fbeecb" stroke="#b59a60" stroke-width="1.3"/><path d="M8 12H14M11 9V15M9 10 13 14M13 10 9 14" stroke="#14648a" stroke-width="1.3"/>`)}
          <span>收藏夹</span>
        </div>
      </div>
      <div class="phead">
        <b>模型树</b>
        ${ic(23, 26, `<path d="M1 2H14V8H1Z" fill="#555"/><rect x="5" y="8" width="5" height="17" fill="#d8b060" stroke="#7a6238" stroke-width=".8"/><rect x="17" y="1" width="3" height="13" fill="#888"/><rect x="15.5" y="14" width="6" height="11" rx="2" fill="#d49a3a" stroke="#7a5a20" stroke-width=".8"/>`)}
        ${tri}
        ${ic(20, 24, `<path d="M1 1H13L19 6V23H1Z" fill="#f6f7f7" stroke="#9aa"/><path d="M4 9H6M4 13H6M4 17H6" stroke="#666" stroke-width="2"/><path d="M9 9H16M9 13H16M9 17H16" stroke="#666"/>`)}
        ${tri}
        ${ic(26, 26, `<g stroke="#ccc" fill="#f3f3f3"><rect x="1" y="1" width="6" height="5"/><rect x="1" y="10" width="6" height="5"/><rect x="1" y="19" width="6" height="5"/><rect x="11" y="1" width="6" height="5"/><rect x="19" y="1" width="6" height="5"/><rect x="11" y="10" width="6" height="5"/></g><ellipse cx="19" cy="18" rx="6" ry="4" fill="#bbb"/><path d="M13 12 25 25" stroke="#aaa"/>`)}
      </div>
      <div class="filter">
        ${ic(20, 24, `<path d="M1 3H19L12 12V22L8 20V12Z" fill="#f0f0f0" stroke="#999" stroke-width="1.4"/>`)}
        <div class="search">${ic(12, 12, `<path d="M1 1 11 11M11 1 1 11" stroke="#aaa" stroke-width="1.5"/>`)}</div>
        ${tri}
        ${ic(14, 14, `<path d="M7 1V13M1 7H13" stroke="#999" stroke-width="3"/>`)}
      </div>
      <div class="treewrap">
        <div class="tree">
          ${rows.map(r => html`<div class="row l${r.l}">
            ${r.l > 0 ? html`<span class="ar ${r.a ?? ''}"><i></i></span>` : ''}
            <span class="ti">${T[r.i]}</span>
            <span>${r.t}</span>
          </div>`)}
        </div>
        <div class="green"></div>
        <div class="sbar">
          <div class="sbtn up"><i class="tri" style="border-top:0;border-bottom:6px solid #999"></i></div>
          <div class="sbtn dn"><i class="tri" style="border-top-color:#999"></i></div>
        </div>
      </div>
    </div>`;
  }

  private _canvas() {
    const tool = FT.map((t, i) => html`<span class=${ftOn.has(i) ? 'on' : ''}>${t}</span>`);
    return html`<div class="canvas">
      ${unsafeHTML(DRIVER)}
      <div class="ft">${tool}</div>
    </div>`;
  }

  private _status() {
    return html`<div class="status">
      <div class="stog">${ic(20, 26, `<rect x="1" y="1" width="18" height="22" fill="#f5f5f5" stroke="#999"/><rect x="1" y="1" width="18" height="4" fill="#ccc"/><rect x="2" y="9" width="4" height="13" fill="${B}" stroke="${E}"/><circle cx="15" cy="20" r="5" fill="#444"/><circle cx="15" cy="20" r="2" fill="#eee"/>`)}</div>
      ${ic(22, 28, `<ellipse cx="11" cy="15" rx="8" ry="11" transform="rotate(25 11 15)" fill="#6aaed6" stroke="#d8e8f0" stroke-width="2"/><path d="M8 6 16 22M3 14 19 14" stroke="#fff"/><path d="M14 1C19 1 21 5 20 9" fill="none" stroke="#8a9aa4" stroke-width="1.4"/>`)}
      <span style="width:9px"></span>
      ${ic(20, 28, `<rect x="1" y="2" width="18" height="24" fill="#fff" stroke="${E}" stroke-width="1.5"/><rect x="3" y="4" width="14" height="20" fill="#f0f4f6"/>`)}
      <i class="vs"></i>
      <i class="dot"></i>
      <span class="stext">基准平面将不显示。</span>
      <div class="bino">
        <div class="binobox">
          <span>${ic(24, 24, `<path d="M4 3H10V9H14V3H20L23 22H14V13H10V22H1Z" fill="#333"/><path d="M5 5H8V13H4ZM16 5H19L20 13H16Z" fill="#999"/>`)}</span>
          ${tri}
        </div>
      </div>
      <div class="geo"><em>几何</em><div>${tri}</div></div>
    </div>`;
  }

  private _taskbar() {
    const item = (i: unknown, t: string, on = false) => html`<div class="titem ${on ? 'on' : ''}"><span class="ticon">${i}</span><span>${t}</span></div>`;
    return html`<div class="taskbar">
      <div class="tstart">
        ${ic(22, 22, `<path d="M0 3 9 2V10H0ZM10 2 22 0V10H10ZM0 11H9V19L0 18ZM10 11H22V22L10 20Z" fill="#fff"/>`)}
        ${ic(30, 36, `<ellipse cx="15" cy="18" rx="12" ry="15" fill="none" stroke="url(#tbw)" stroke-width="7"/><defs><linearGradient id="tbw" x2="1" y2="1"><stop offset="0" stop-color="#f04"/><stop offset=".35" stop-color="#fb0"/><stop offset=".65" stop-color="#3c6"/><stop offset="1" stop-color="#08f"/></linearGradient></defs><circle cx="15" cy="18" r="4.5" fill="#fff"/>`)}
      </div>
      ${TB.map(x => item(x.i, x.t))}
      <div class="vm">${ic(30, 38, `<path d="M9 2H28V22H15" fill="none" stroke="#1f9ad6" stroke-width="4"/><path d="M9 2V14H22V8" fill="none" stroke="#1f9ad6" stroke-width="4"/><path d="M2 14H20V36H2Z" fill="none" stroke="#f08a14" stroke-width="4"/>`)}</div>
      ${TB2.map(x => item(x.i, x.t, x.on))}
      <div class="tray">
        <span>${ic(18, 12, `<path d="M1 11 9 2 17 11" fill="none" stroke="#eef2f4" stroke-width="1.4"/>`)}</span>
        <span>${ic(16, 30, `<rect width="16" height="30" rx="8" fill="#0a84e8"/><path d="M4 10 12 20 8 25V5L12 10 4 20" fill="none" stroke="#fff" stroke-width="1.3"/>`)}</span>
        <span>${ic(18, 24, `<circle cx="11" cy="8" r="5.5" fill="none" stroke="#ee8a14" stroke-width="3"/><path d="M7 13 2 22" stroke="#ee8a14" stroke-width="3.5"/>`)}</span>
        <span>${ic(18, 28, `<path d="M1 4 9 1 17 4V14C17 21 13 25 9 27 5 25 1 21 1 14Z" fill="#f5b93a"/><path d="M9 8C13 13 13 20 9 22 5 20 5 14 9 8Z" fill="#fff"/><path d="M9 1 17 4V8L9 6Z" fill="#e8642a"/>`)}</span>
        <span>${ic(22, 24, `<rect x="5" y="6" width="15" height="15" fill="#1c2d40" stroke="#eef2f4" stroke-width="1.4"/><rect x="8" y="9" width="9" height="9" fill="#eef2f4"/><path d="M2 2V6M1 6H5" stroke="#eef2f4"/>`)}</span>
        <span>${ic(22, 24, `<circle cx="11" cy="12" r="9.5" fill="none" stroke="#eef2f4" stroke-width="1.4"/><ellipse cx="11" cy="12" rx="4" ry="9.5" fill="none" stroke="#eef2f4"/><path d="M2 9H20M2 15H20" stroke="#eef2f4"/>`)}</span>
        <span>${ic(22, 22, `<path d="M2 8H6L11 3V19L6 14H2Z" fill="none" stroke="#eef2f4" stroke-width="1.2"/><path d="M14 8 20 14M20 8 14 14" stroke="#eef2f4" stroke-width="1.2"/>`)}</span>
        <span>英</span>
        <span style="margin-left:6px"><b style="font-weight:400;font-size:15px;background:#fff;color:#111;padding:2px 3px;line-height:18px">拼</b></span>
      </div>
      <div class="clock">14:11:16</div>
      <div class="clock d">2023/11/4</div>
      <div class="wm">UG爱好者论坛@wangjs</div>
    </div>`;
  }

  render() {
    return html`<div class="page">
      ${this._titleBar()}
      ${this._tabs()}
      ${this._ribbon()}
      <div class="main">
        ${this._panel()}
        ${this._canvas()}
      </div>
      ${this._status()}
      ${this._taskbar()}
    </div>`;
  }
}

declare global {
  interface HTMLElementTagNameMap {
    'app-root': AppRoot
  }
}
